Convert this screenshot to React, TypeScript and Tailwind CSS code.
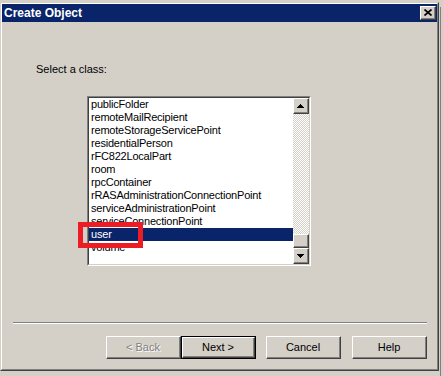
import React from 'react';

const classes = [
  'publicFolder',
  'remoteMailRecipient',
  'remoteStorageServicePoint',
  'residentialPerson',
  'rFC822LocalPart',
  'room',
  'rpcContainer',
  'rRASAdministrationConnectionPoint',
  'serviceAdministrationPoint',
  'serviceConnectionPoint',
  'user',
  'volume',
];

function Bevel({ children, className = '' }: { children?: React.ReactNode; className?: string }) {
  return (
    <div
      className={`border border-t-white border-l-white border-r-[#404040] border-b-[#404040] bg-[#d4d0c8] ${className}`}
    >
      <div className="w-full h-full border-r border-b border-[#808080] flex items-center justify-center">
        {children}
      </div>
    </div>
  );
}

function ArrowUp() {
  return (
    <svg width="7" height="4" viewBox="0 0 7 4" shapeRendering="crispEdges">
      <polygon points="0,4 7,4 3.5,0" fill="#000" />
    </svg>
  );
}

function ArrowDown() {
  return (
    <svg width="7" height="4" viewBox="0 0 7 4" shapeRendering="crispEdges">
      <polygon points="0,0 7,0 3.5,4" fill="#000" />
    </svg>
  );
}

function Button({
  label,
  isDefault = false,
  disabled = false,
  className = '',
}: {
  label: string;
  isDefault?: boolean;
  disabled?: boolean;
  className?: string;
}) {
  const text = (
    <span
      className={
        disabled
          ? 'text-[11px] leading-none text-[#808080] [text-shadow:1px_1px_0_#fff]'
          : 'text-[11px] leading-none text-black'
      }
    >
      {label}
    </span>
  );
  if (isDefault) {
    return (
      <div className={`w-[75px] h-[23px] border border-black ${className}`}>
        <Bevel className="w-full h-full">{text}</Bevel>
      </div>
    );
  }
  return <Bevel className={`w-[75px] h-[23px] ${className}`}>{text}</Bevel>;
}

export default function App() {
  return (
    <div className="relative w-[443px] h-[376px] bg-[#d4d0c8] overflow-hidden flex font-['Liberation_Sans',Arial,sans-serif]">
      {/* window */}
      <div className="mt-[2px] w-[439px] h-[369px] shrink-0 border border-t-[#d4d0c8] border-l-[#d4d0c8] border-r-[#404040] border-b-[#404040]">
        <div className="w-full h-full border border-t-white border-l-white border-r-[#808080] border-b-[#808080] flex flex-col">
          {/* title bar */}
          <div className="h-[18px] bg-[#0a246a] flex items-center justify-between pl-[2px] pr-[1px]">
            <span className="text-white font-bold text-[12px] leading-[18px]">Create Object</span>
            <Bevel className="w-[16px] h-[14px]">
              <svg width="8" height="7" viewBox="0 0 8 7">
                <path d="M0.5 0.5L7.5 6.5M7.5 0.5L0.5 6.5" stroke="#000" strokeWidth="1.7" />
              </svg>
            </Bevel>
          </div>

          {/* body */}
          <div className="flex flex-col">
            <p className="mt-[41px] ml-[34px] text-[11px] leading-[13px] text-black">Select a class:</p>

            {/* listbox */}
            <div className="mt-[20px] ml-[85px] w-[224px] h-[170px] border border-t-[#808080] border-l-[#808080] border-r-white border-b-white">
              <div className="w-full h-full border border-t-[#404040] border-l-[#404040] border-r-[#d4d0c8] border-b-[#d4d0c8] bg-white flex">
                <div className="flex-1 flex flex-col">
                  {classes.map((c) => (
                    <div
                      key={c}
                      className={`h-[13px] pl-[2px] text-[11px] leading-[13px] tracking-[-0.2px] whitespace-nowrap ${
                        c === 'user' ? 'bg-[#0a246a] text-white' : 'text-black'
                      }`}
                    >
                      {c}
                    </div>
                  ))}
                </div>
                {/* scrollbar */}
                <div className="w-[16px] h-full flex flex-col">
                  <Bevel className="w-[16px] h-[16px]">
                    <ArrowUp />
                  </Bevel>
                  <div className="flex-1 bg-[image:repeating-conic-gradient(#ffffff_0%_25%,#d4d0c8_0%_50%)] bg-[length:2px_2px]" />
                  <Bevel className="w-[16px] h-[14px]" />
                  <Bevel className="w-[16px] h-[16px]">
                    <ArrowDown />
                  </Bevel>
                </div>
              </div>
            </div>

            {/* separator */}
            <div className="mt-[56px] ml-[11px] w-[414px] h-[2px] border-t border-t-[#808080] border-b border-b-white" />

            {/* buttons */}
            <div className="mt-[12px] ml-[104px] flex">
              <Button label="< Back" disabled />
              <Button label="Next >" isDefault />
              <Button label="Cancel" className="ml-[10px]" />
              <Button label="Help" className="ml-[11px]" />
            </div>
          </div>
        </div>
      </div>

      {/* window behind, right edge */}
      <div className="ml-[1px] mt-[7px] w-px h-full bg-[#808080]" />

      {/* red highlight over the selected row */}
      <div className="absolute left-[78px] top-[222px] w-[65px] h-[26px] border-[5px] border-[#ed1c24]" />
    </div>
  );
}
